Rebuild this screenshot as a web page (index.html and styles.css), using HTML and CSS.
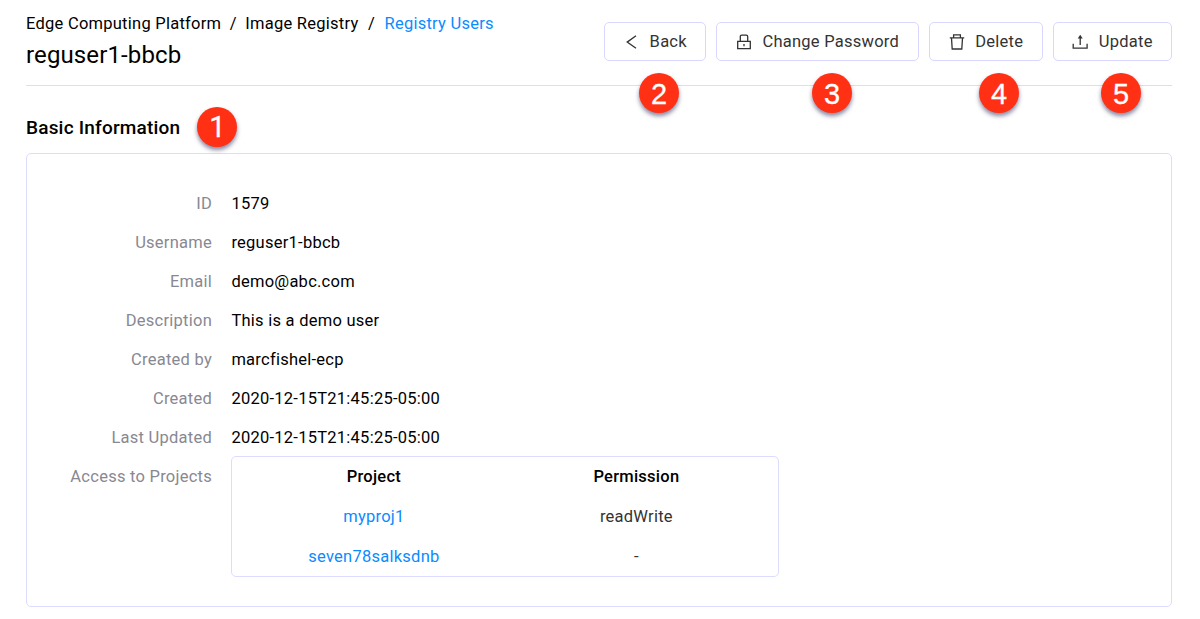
FILE: index.html
```html
<!DOCTYPE html>
<html lang="en">
<head>
<meta charset="utf-8">
<title>Registry Users</title>
<link rel="stylesheet" href="styles.css">
</head>
<body>
<header class="page-header">
  <div class="heading">
    <nav class="breadcrumb"><span>Edge Computing Platform</span><i>/</i><span>Image Registry</span><i class="last">/</i><a class="link">Registry Users</a></nav>
    <h1 class="title">reguser1-bbcb</h1>
  </div>
  <div class="actions">
    <div class="action back"><button class="btn"><svg class="icon" viewBox="0 0 16 16"><path d="M13 1.8 4.2 8.1l8.8 6.2"/></svg><span>Back</span></button><b class="badge">2</b></div>
    <div class="action password"><button class="btn"><svg class="icon" viewBox="0 0 16 16"><path d="M1.7 7.4h12.6v7.2H1.7zM4.3 7.4V2.6q0-1.5 1.5-1.5h4.4q1.5 0 1.5 1.5v4.8M8 10v2.2"/></svg><span>Change Password</span></button><b class="badge">3</b></div>
    <div class="action delete"><button class="btn"><svg class="icon" viewBox="0 0 16 16"><path d="M.8 3.8h14.4M4.6 3.6V.9h6.8v2.7M2.5 4l.7 11h9.6l.7-11"/></svg><span>Delete</span></button><b class="badge">4</b></div>
    <div class="action update"><button class="btn"><svg class="icon" viewBox="0 0 16 16"><path d="M1.2 9.8v4.4h13.9V9.8M8.2 11V3"/><path class="solid" d="M8.2.8 5.7 4.6h5z"/></svg><span>Update</span></button><b class="badge">5</b></div>
  </div>
</header>
<main>
  <h2 class="section-title">Basic Information<b class="badge one">1</b></h2>
  <section class="card">
    <dl class="details">
      <dt>ID</dt><dd>1579</dd>
      <dt>Username</dt><dd>reguser1-bbcb</dd>
      <dt>Email</dt><dd>demo@abc.com</dd>
      <dt>Description</dt><dd>This is a demo user</dd>
      <dt>Created by</dt><dd>marcfishel-ecp</dd>
      <dt>Created</dt><dd>2020-12-15T21:45:25-05:00</dd>
      <dt>Last Updated</dt><dd>2020-12-15T21:45:25-05:00</dd>
      <dt>Access to Projects</dt>
      <dd>
        <div class="projects">
          <strong>Project</strong><strong>Permission</strong>
          <a class="link">myproj1</a><span>readWrite</span>
          <a class="link">seven78salksdnb</a><span>-</span>
        </div>
      </dd>
    </dl>
  </section>
</main>
</body>
</html>
```
FILE: styles.css
```css
* { box-sizing: border-box; }
body { margin: 0; padding: 0 28px 0 26px; background: #fff; color: #000; font: 16.5px/39px Roboto, sans-serif; letter-spacing: .25px; }
h1, h2, dl, dd { margin: 0; }
.page-header { display: flex; justify-content: space-between; height: 86px; border-bottom: 1px solid #dcdcff; }
.heading { padding-top: 12px; }
.breadcrumb { display: flex; line-height: 24px; }
.breadcrumb i { width: 24px; text-align: center; font-style: normal; }
.breadcrumb .last { width: 26px; }
.link { color: #0a8bff; }
.title { font-size: 24px; line-height: 36px; font-weight: 400; letter-spacing: .12px; margin-top: 1px; }
.actions { display: flex; gap: 10px; padding-top: 22px; }
.action { position: relative; height: 39px; }
.back { width: 102px; }
.password { width: 203px; }
.delete { width: 114px; }
.update { width: 119px; }
.btn { width: 100%; height: 39px; display: flex; align-items: center; justify-content: center; gap: 10.5px; padding: 0; border: 1px solid #d8d8ff; border-radius: 5px; background: #fff; color: #333; font: inherit; letter-spacing: inherit; }
.icon { width: 16px; height: 16px; flex: none; fill: none; stroke: #333; stroke-width: 1.3; }
.solid { fill: #333; stroke: none; }
.badge { width: 40px; height: 40px; border-radius: 50%; background: #ff3014; color: #fff; font: 29px/42px "Liberation Sans", sans-serif; letter-spacing: 0; text-align: center; -webkit-text-stroke: .3px #fff; box-shadow: 0 3px 4px rgba(40, 40, 90, .55); }
.action .badge { position: absolute; top: 51px; left: 35px; }
.password .badge { left: 96px; }
.delete .badge { left: 50px; }
.update .badge { left: 48px; }
.section-title { display: flex; align-items: center; gap: 17px; height: 67px; padding-top: 16px; font-size: 19px; line-height: 40px; font-weight: 500; letter-spacing: .2px; }
.badge.one { font-family: Roboto, sans-serif; line-height: 41px; margin-top: -1px; }
.card { height: 454px; padding: 30px 0 0; border: 1px solid #dcdcff; border-radius: 5px; }
.details { display: grid; grid-template-columns: 185px 547.5px; column-gap: 19.4px; grid-auto-rows: 39px; }
.details dt { color: #888892; text-align: right; }
.projects { display: grid; grid-template-columns: 283px 242px; grid-auto-rows: 40px; height: 121px; margin-top: -1px; border: 1px solid #dcdcff; border-radius: 5px; text-align: center; line-height: 39px; }
.projects strong { font-weight: 500; }
.projects span { color: #333; }
```
